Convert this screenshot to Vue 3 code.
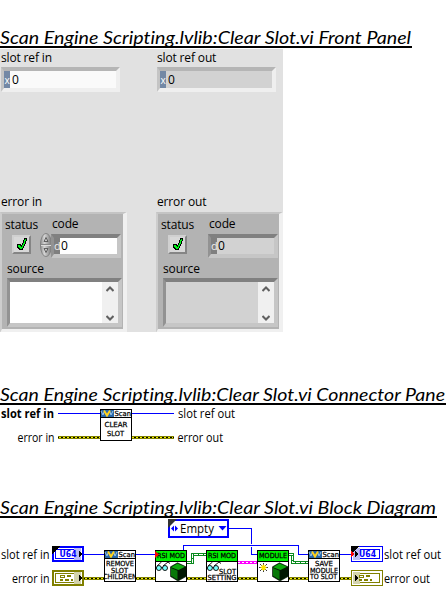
<script setup>
const clusters = [
  { kind: 'control', label: 'error in' },
  { kind: 'indicator', label: 'error out' },
]
const refs = [
  { kind: 'control', label: 'slot ref in' },
  { kind: 'indicator', label: 'slot ref out' },
]
const headings = {
  panel: { text: 'Scan Engine Scripting.lvlib:Clear Slot.vi Front Panel', width: 412 },
  pane: { text: 'Scan Engine Scripting.lvlib:Clear Slot.vi Connector Pane', width: 446 },
  diagram: { text: 'Scan Engine Scripting.lvlib:Clear Slot.vi Block Diagram', width: 437 },
}
const scanNodes = [
  { x: 104, lines: [['REMOVE', 2, 28, 16], ['SLOT', 7, 17, 23], ['CHILDREN', -1, 34, 29]] },
  { x: 308, lines: [['SAVE', 7, 18, 16], ['MODULE', 2, 28, 23], ['TO SLOT', 2, 27, 29]] },
]
const greenNodes = [
  { x: 155, title: 'RSI MOD', tx: 2, tw: 28, glasses: true, cube: true },
  { x: 206, title: 'RSI MOD', tx: 2, tw: 28, glasses: true, cube: false },
  { x: 257, title: 'MODULE', tx: 2, tw: 28, glasses: false, cube: true },
]
const errorWires = [[84, 104], [136, 155], [187, 206], [238, 257], [289, 308], [340, 351]]
</script>

<template>
  <main class="doc">
    <h2 class="first">
      <svg :width="headings.panel.width" height="22"><text x="0" y="20" :textLength="headings.panel.width - 1" lengthAdjust="spacingAndGlyphs">{{ headings.panel.text }}</text></svg>
    </h2>

    <section class="front">
      <div class="row refs">
        <div v-for="r in refs" :key="r.label" class="ref" :class="r.kind">
          <label>{{ r.label }}</label>
          <div class="well"><i class="radix">x</i><span>0</span></div>
        </div>
      </div>
      <div class="row">
        <div v-for="c in clusters" :key="c.label" class="cluster-wrap" :class="c.kind">
          <label>{{ c.label }}</label>
          <div class="cluster">
            <div class="captions"><label>status</label><label>code</label></div>
            <div class="fields">
              <div class="led">
                <svg width="15" height="15" shape-rendering="crispEdges">
                  <path d="M10 1h3v3h-1v3h-1v2h-1v2H9v2H5v-1H4v-1H3V7h4v1h1V6h1V3h1z" fill="#000" />
                  <path d="M11 2h1v2h-1v3h-1v2H9v2H8v1H6v-1H5v-1H4V8h2v1h1v1h1V8h1V6h1V3h1z" fill="#00f51a" />
                </svg>
              </div>
              <svg class="spin" width="13" height="24">
                <defs>
                  <linearGradient id="metal"><stop offset="0" stop-color="#8c8c8c" /><stop offset=".35" stop-color="#d5d5d5" /><stop offset="1" stop-color="#777" /></linearGradient>
                </defs>
                <template v-if="c.kind === 'control'">
                  <ellipse cx="6" cy="12" rx="5.6" ry="11.6" fill="url(#metal)" stroke="#7b7b7b" stroke-width=".8" />
                  <path d="M1 11.5h10" stroke="#888" /><path d="M1 12.5h10" stroke="#ddd" />
                  <path d="M4 8.5l2-4 2 4z" fill="#c9c9c9" stroke="#555" stroke-width=".9" />
                  <path d="M4 15.5l2 4 2-4z" fill="#c9c9c9" stroke="#555" stroke-width=".9" />
                </template>
              </svg>
              <div class="well code"><i class="radix">d</i><span>0</span></div>
            </div>
            <label class="source-label">source</label>
            <div class="well source">
              <div class="scroll">
                <svg width="8" height="6"><path d="M.5 5L4 1.5 7.5 5" /></svg>
                <svg width="8" height="6"><path d="M.5 1L4 4.5 7.5 1" /></svg>
              </div>
            </div>
          </div>
        </div>
      </div>
    </section>

    <h2 class="second">
      <svg :width="headings.pane.width" height="22"><text x="0" y="20" :textLength="headings.pane.width - 1" lengthAdjust="spacingAndGlyphs">{{ headings.pane.text }}</text></svg>
    </h2>

    <svg class="canvas" width="446" height="89" viewBox="0 405 446 89">
      <defs>
        <g id="scan-icon">
          <rect x=".5" y=".5" width="31" height="31" fill="#fff" stroke="#000" shape-rendering="crispEdges" />
          <rect x="1" y="1" width="13" height="7" fill="#2867a8" shape-rendering="crispEdges" />
          <path d="M1 2l2 4 1-3M10 3l1 3 2-4" stroke="#9bc4e8" fill="none" />
          <path d="M4 1.5l3 5 3-5" stroke="#ffd21c" stroke-width="2" fill="none" />
          <path d="M1 8.5h30" stroke="#000" shape-rendering="crispEdges" />
          <text class="pix" x="14.5" y="7" textLength="16.5" lengthAdjust="spacingAndGlyphs">Scan</text>
        </g>
      </defs>
      <g class="lbl">
        <text class="bold" x="1" y="418" textLength="53" lengthAdjust="spacingAndGlyphs">slot ref in</text>
        <text x="17.500" y="442" textLength="37" lengthAdjust="spacingAndGlyphs">error in</text>
        <text x="178" y="418" textLength="57" lengthAdjust="spacingAndGlyphs">slot ref out</text>
        <text x="177.500" y="442" textLength="45.500" lengthAdjust="spacingAndGlyphs">error out</text>
      </g>
      <g shape-rendering="crispEdges">
        <path d="M58 413.500H100M132 413.500H174" stroke="#00f" />
        <path class="err" d="M58 437.500H100M132 437.500H174" />
        <path class="err-core" d="M58 437.500H100M132 437.500H174" />
        <path class="err-dash" d="M59 437.500H100M132 437.500H173" />
      </g>
      <g transform="translate(100 409)">
        <use href="#scan-icon" />
        <text class="pix" x="4.500" y="18" textLength="23" lengthAdjust="spacingAndGlyphs">CLEAR</text>
        <text class="pix" x="7" y="27" textLength="17" lengthAdjust="spacingAndGlyphs">SLOT</text>
      </g>
    </svg>

    <h2>
      <svg :width="headings.diagram.width" height="22"><text x="0" y="20" :textLength="headings.diagram.width - 1" lengthAdjust="spacingAndGlyphs">{{ headings.diagram.text }}</text></svg>
    </h2>

    <svg class="canvas" width="446" height="94" viewBox="0 518 446 94">
      <defs>
        <clipPath id="node-clip"><rect x="1" y="1" width="30" height="30" /></clipPath>
        <g id="glasses" fill="#7ff" stroke="#000" stroke-width=".9">
          <path d="M2 16l4.500-4M8 16l5-4 2 1.500M6 17.500h2" fill="none" />
          <circle cx="3.900" cy="18" r="2.500" /><circle cx="10" cy="18" r="2.500" />
        </g>
        <g id="cube">
          <path d="M22.500 12.800l8.500 4v9.700l-8 4.500-7.500-4.500v-9.700z" fill="#021802" stroke="#021802" stroke-width=".6" />
          <path d="M22.500 13.500l7.500 3.300-6.500 3.200-7.500-2.700z" fill="#0bab0b" />
          <path d="M16 18l6.500 2.800v9l-6.500-4z" fill="#087808" />
        </g>
      </defs>

      <g fill="none" shape-rendering="crispEdges">
        <path d="M84 554.500H104M136 554.500H155M183.500 550V545.500H298.500V554.500H308M340 554.500H351" stroke="#00f" />
        <path d="M229 528.500H251.500V544M251.500 547V554.500H257" stroke="#00f" />
        <g stroke="#0a8a1e" stroke-width="3"><path d="M187 562.500H192.500V554.500H206M289 554.500H292.500V562.500H308" /></g>
        <g stroke="#fff" stroke-dasharray="4 1"><path d="M187 562.500H192.500V554.500H206M289 554.500H292.500V562.500H308" /></g>
        <path d="M238 562.500H257" stroke="#f0f" stroke-width="3" />
        <path d="M238 562.500H257" stroke="#fff" stroke-dasharray="2 2" />
        <template v-for="w in errorWires" :key="w[0]">
          <path class="err" :d="`M${w[0]} 578.5H${w[1]}`" />
          <path class="err-core" :d="`M${w[0]} 578.5H${w[1]}`" />
          <path class="err-dash" :d="`M${w[0] + 1} 578.5H${w[1]}`" />
        </template>
      </g>

      <g class="lbl">
        <text x="1" y="559" textLength="48.500" lengthAdjust="spacingAndGlyphs">slot ref in</text>
        <text x="12" y="583" textLength="37.500" lengthAdjust="spacingAndGlyphs">error in</text>
        <text x="384" y="559" textLength="57" lengthAdjust="spacingAndGlyphs">slot ref out</text>
        <text x="384" y="583" textLength="46" lengthAdjust="spacingAndGlyphs">error out</text>
      </g>

      <g>
        <rect x="169" y="520" width="59" height="17" fill="#fff" stroke="#00f" stroke-width="2" />
        <path d="M168 519h9l-9 9z" fill="#333" />
        <path d="M174 525.500v6l-3-3zM175 525.500v6l3-3z" fill="#00f" />
        <path d="M218.500 526h8l-4 4.500z" fill="#00f" />
        <text class="lbl" x="180" y="533" textLength="34" lengthAdjust="spacingAndGlyphs">Empty</text>
      </g>

      <g v-for="t in [52, 351]" :key="t" shape-rendering="crispEdges">
        <g :transform="`translate(${t} 546)`">
          <rect width="32" height="16" fill="#00f" />
          <rect :x="t === 52 ? 2 : 1" :y="t === 52 ? 2 : 1" :width="t === 52 ? 28 : 30" :height="t === 52 ? 12 : 14" fill="#fff" />
          <rect x="3.500" y="3.500" width="25" height="9" fill="none" stroke="#00f" />
          <rect :x="t === 52 ? 22 : 2" y="2" width="7" height="12" fill="#bcbcf4" />
          <path d="M0 0h8L0 8z" fill="#000" />
          <path :d="t === 52 ? 'M27 5v6l3-3z' : 'M4 5v6l4-3z'" fill="#000" />
          <path v-if="t !== 52" d="M0 5v6l3-3z" fill="#f00" />
          <text class="u64" :x="t === 52 ? 7.5 : 8" y="11" textLength="17" lengthAdjust="spacingAndGlyphs">U64</text>
        </g>
        <g :transform="`translate(${t} 570)`">
          <rect width="32" height="16" fill="#808000" />
          <rect :x="t === 52 ? 2 : 1" :y="t === 52 ? 2 : 1" :width="t === 52 ? 28 : 30" :height="t === 52 ? 12 : 14" fill="#fff" />
          <rect x="3.500" y="3.500" width="25" height="9" fill="none" stroke="#808000" />
          <rect :x="t === 52 ? 22 : 2" y="2" width="7" height="12" fill="#d3d3ac" />
          <path :d="t === 52 ? 'M27 5v6l3-3z' : 'M4 5v6l4-3z'" fill="#000" />
          <path d="M8 5h5v3H8zM15 5h4v2h-4zM8 9h3v2H8zM13 9h4v2h-4zM19 9h2v2h-2z" fill="#808000" />
          <path d="M9 6h3v1H9z" fill="#fff" />
        </g>
      </g>

      <g v-for="n in scanNodes" :key="n.x" :transform="`translate(${n.x} 550)`">
        <use href="#scan-icon" />
        <g clip-path="url(#node-clip)">
          <text v-for="l in n.lines" :key="l[0]" class="pix" :x="l[1]" :y="l[3]" :textLength="l[2]" lengthAdjust="spacingAndGlyphs">{{ l[0] }}</text>
        </g>
      </g>

      <g v-for="n in greenNodes" :key="n.x" :transform="`translate(${n.x} 550)`">
        <g shape-rendering="crispEdges">
          <rect x=".5" y=".5" width="31" height="31" fill="#fff" stroke="#000" />
          <rect x="1" y="1" width="30" height="10" fill="#00f000" />
          <path d="M1 11.500h30" stroke="#000" />
        </g>
        <text class="pix" :x="n.tx" y="8" :textLength="n.tw" lengthAdjust="spacingAndGlyphs">{{ n.title }}</text>
        <use v-if="n.glasses" href="#glasses" />
        <g v-else>
          <path d="M6.500 13v9M2 17.500h9M3 14l7 7M10 14l-7 7" stroke="#222" stroke-width=".9" />
          <path d="M6.500 14.500v6M3.500 17.500h6M4.500 15.500l4 4M8.500 15.500l-4 4" stroke="#ffe600" stroke-width="1.200" />
        </g>
        <use v-if="n.cube" href="#cube" />
        <template v-else>
          <text class="pix" x="13" y="24" textLength="17" lengthAdjust="spacingAndGlyphs">SLOT</text>
          <text class="pix" x="1.500" y="30" textLength="29" lengthAdjust="spacingAndGlyphs">SETTING</text>
        </template>
      </g>
      <path d="M155 551v7l4-3.500z" fill="#f00" />
    </svg>
  </main>
</template>

<style>
body { background: #fff; overflow: hidden; }
</style>

<style scoped>
.doc { width: 446px; height: 612px; overflow: hidden; color: #000; font: 12px/16px "Open Sans", "Noto Sans", sans-serif; }
h2 { margin: 0; width: fit-content; height: 22px; border-bottom: 2px solid #000; }
h2 svg { display: block; font: italic 400 18px Lato, sans-serif; font-variant-ligatures: none; }
h2.first { padding-top: 24px; }
h2.second { padding-top: 49px; }
.canvas { display: block; }
.lbl { font: 12px "Open Sans", "Noto Sans", sans-serif; }
.lbl .bold { font-weight: 700; }
.pix { font: 7px "DejaVu Sans", sans-serif; fill: #000; stroke: #000; stroke-width: .25; }
.u64 { font: 700 9px "DejaVu Sans", sans-serif; fill: #00f; }
.err { stroke: #808000; stroke-width: 3; }
.err-core { stroke: #000; stroke-width: 1; }
.err-dash { stroke: #f0f000; stroke-width: 1; stroke-dasharray: 2 2; }

.front { width: 283px; height: 283px; margin-top: 1px; background: #e1e1e1; overflow: hidden; }
label { display: block; height: 16px; white-space: nowrap; letter-spacing: -.15px; }
.row { display: flex; gap: 29px; }
.refs { height: 144px; }
.ref { width: 120px; padding-top: 1px; margin-right: 7px; }
.ref label, .cluster-wrap > label { padding-left: 1px; }
.well { display: flex; box-sizing: border-box; border: 3px solid; border-color: #b5b5b5 #efefef #efefef #c4c4c4; border-width: 4px 4px 4px 3px; background: #fafafa; }
.indicator .well { background: #d2d2d2; }
.ref .well { width: 119px; height: 25px; margin: 1px 0 0 1px; }
.radix { width: 6px; background: #7388a5; color: #fff; font: 10px/18px "Open Sans", sans-serif; text-align: center; }
.well span { padding-left: 2px; line-height: 18px; }

.cluster-wrap { width: 127px; }
.cluster-wrap > label { padding-top: 1px; height: 18px; }
.cluster { box-sizing: border-box; width: 127px; height: 121px; background: #b3b3b3; border: solid; border-width: 2px 4px 4px 2px; border-color: #c4c4c4 #f0f0f0 #f0f0f0 #cdcdcd; }
.captions { display: grid; grid-template-columns: 47px 1fr; padding: 3px 0 0 3px; }
.indicator .captions { grid-template-columns: 48px 1fr; }
.captions label + label { margin-top: -1px; }
.fields { display: flex; height: 25px; padding: 1px 0 0 10px; }
.led { box-sizing: border-box; width: 19px; height: 19px; margin-top: 1px; border: 2px solid; border-color: #d0d0d0 #858585 #858585 #d0d0d0; background: #d8d8d8; }
.led svg { display: block; }
.spin { margin: -1px 0 0 9px; flex: none; }
.cluster .well { border-color: #808080 #c6c6c6 #c6c6c6 #929292; }
.well.code { width: 70px; height: 24px; margin-left: -2px; background: #fff; }
.indicator .well.code { background: #d2d2d2; margin-left: -1px; }
.code .radix { background: #7f7f7f; color: #eee; font-size: 11px; line-height: 16px; }
.code span { padding-left: 1px; line-height: 16px; }
.source-label { padding-left: 5px; margin-top: 2px; }
.well.source { width: 115px; height: 49px; margin: 1px 0 0 5px; background: #fff; justify-content: flex-end; }
.indicator .well.source { background: #d2d2d2; }
.scroll { display: flex; flex-direction: column; justify-content: space-between; align-items: center; width: 16px; padding: 4px 0 2px; box-sizing: border-box; background: #f0f0f0; }
.scroll svg { display: block; fill: none; stroke: #606060; stroke-width: 2; }
</style>
